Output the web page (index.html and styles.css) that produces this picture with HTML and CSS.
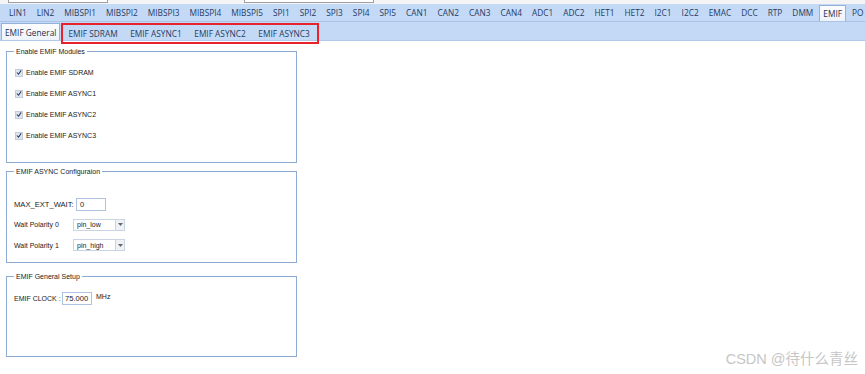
FILE: index.html
```html
<!DOCTYPE html>
<html lang="en">
<head>
    <meta charset="UTF-8">
    <meta name="viewport" content="width=device-width, initial-scale=1.0">
    <title>EMIF</title>
    <link rel="stylesheet" href="styles.css">
</head>
<body>
    <div class="top-strip">
        <span class="strip-box one"></span>
        <span class="strip-box two"></span>
    </div>

    <div class="tabbar main-tabs">
        <span class="tab">LIN1</span>
        <span class="tab">LIN2</span>
        <span class="tab">MIBSPI1</span>
        <span class="tab">MIBSPI2</span>
        <span class="tab">MIBSPI3</span>
        <span class="tab">MIBSPI4</span>
        <span class="tab">MIBSPI5</span>
        <span class="tab">SPI1</span>
        <span class="tab">SPI2</span>
        <span class="tab">SPI3</span>
        <span class="tab">SPI4</span>
        <span class="tab">SPI5</span>
        <span class="tab">CAN1</span>
        <span class="tab">CAN2</span>
        <span class="tab">CAN3</span>
        <span class="tab">CAN4</span>
        <span class="tab">ADC1</span>
        <span class="tab">ADC2</span>
        <span class="tab">HET1</span>
        <span class="tab">HET2</span>
        <span class="tab">I2C1</span>
        <span class="tab">I2C2</span>
        <span class="tab">EMAC</span>
        <span class="tab">DCC</span>
        <span class="tab">RTP</span>
        <span class="tab">DMM</span>
        <span class="tab active">EMIF</span>
        <span class="tab">PO</span>
    </div>

    <div class="tabbar sub-tabs">
        <span class="tab active">EMIF General</span>
        <div class="highlight">
            <span class="tab">EMIF SDRAM</span>
            <span class="tab">EMIF ASYNC1</span>
            <span class="tab">EMIF ASYNC2</span>
            <span class="tab">EMIF ASYNC3</span>
        </div>
    </div>

    <div class="content">
        <fieldset class="group modules">
            <legend>Enable EMIF Modules</legend>
            <label class="check-row"><span class="check"><svg width="7" height="7" viewBox="0 0 7 7"><path d="M1 3.5 L3 5.5 L6 1" fill="none" stroke="#2a3a5a" stroke-width="1.2"/></svg></span>Enable EMIF SDRAM</label>
            <label class="check-row"><span class="check"><svg width="7" height="7" viewBox="0 0 7 7"><path d="M1 3.5 L3 5.5 L6 1" fill="none" stroke="#2a3a5a" stroke-width="1.2"/></svg></span>Enable EMIF ASYNC1</label>
            <label class="check-row"><span class="check"><svg width="7" height="7" viewBox="0 0 7 7"><path d="M1 3.5 L3 5.5 L6 1" fill="none" stroke="#2a3a5a" stroke-width="1.2"/></svg></span>Enable EMIF ASYNC2</label>
            <label class="check-row"><span class="check"><svg width="7" height="7" viewBox="0 0 7 7"><path d="M1 3.5 L3 5.5 L6 1" fill="none" stroke="#2a3a5a" stroke-width="1.2"/></svg></span>Enable EMIF ASYNC3</label>
        </fieldset>

        <fieldset class="group async">
            <legend>EMIF ASYNC Configuraion</legend>
            <div class="field-row">
                <span class="field-label wide">MAX_EXT_WAIT:</span>
                <span class="textbox small">0</span>
            </div>
            <div class="field-row">
                <span class="field-label">Wait Polarity 0</span>
                <span class="combo"><span class="combo-text">pin_low</span><span class="combo-btn"><svg width="5" height="3" viewBox="0 0 5 3"><path d="M0 0 L5 0 L2.5 3 Z" fill="#666"/></svg></span></span>
            </div>
            <div class="field-row">
                <span class="field-label">Wait Polarity 1</span>
                <span class="combo"><span class="combo-text">pin_high</span><span class="combo-btn"><svg width="5" height="3" viewBox="0 0 5 3"><path d="M0 0 L5 0 L2.5 3 Z" fill="#666"/></svg></span></span>
            </div>
        </fieldset>

        <fieldset class="group setup">
            <legend>EMIF General Setup</legend>
            <div class="field-row clock">
                <span class="field-label">EMIF CLOCK :</span>
                <span class="textbox">75.000</span>
                <span class="unit">MHz</span>
            </div>
        </fieldset>
    </div>

    <div class="watermark">CSDN @待什么青丝</div>
</body>
</html>
```

FILE: styles.css
```css
* {
    margin: 0;
    padding: 0;
    box-sizing: border-box;
}

body {
    width: 865px;
    height: 374px;
    background: #ffffff;
    font-family: "Open Sans", "Liberation Sans", sans-serif;
    position: relative;
    overflow: hidden;
}

.top-strip {
    height: 4px;
    display: flex;
    gap: 6px;
    padding-left: 8px;
    background: #f4f4f4;
}

.strip-box {
    height: 3px;
    border: 1px solid #a0a0a0;
    border-top: none;
    background: #ffffff;
}

.strip-box.one {
    width: 100px;
}

.strip-box.two {
    width: 130px;
    margin-left: 130px;
}

.tabbar {
    display: flex;
    align-items: stretch;
    background: #c4d9f6;
    height: 18px;
}

.main-tabs {
    padding-left: 4px;
    border-bottom: 1px solid #a9c2e6;
    overflow: hidden;
}

.sub-tabs {
    height: 19px;
    padding-top: 1px;
    border-bottom: 1px solid #b3cbeb;
}

.tab {
    display: flex;
    align-items: center;
    padding: 0 5px;
    font-size: 8.3px;
    color: #243c63;
    white-space: nowrap;
}

.tab.active {
    background: linear-gradient(#fbfcfe, #eef3fa);
    border: 1px solid #94b1da;
    border-bottom: none;
    color: #1e2f4d;
    margin-top: 1px;
}

.main-tabs .tab.active {
    padding: 0 3px;
    margin-left: 1px;
    margin-right: 1px;
}

.sub-tabs .tab.active {
    padding: 0 3px;
    margin-top: 0;
    margin-left: 1px;
}

.highlight {
    display: flex;
    gap: 8.6px;
    margin-left: 1px;
    padding: 0 5px 0 3px;
    height: 21px;
    border: 2px solid #e8232b;
}

.highlight .tab {
    padding: 0 2px;
}

.content {
    padding: 7px 0 0 6px;
    display: flex;
    flex-direction: column;
    font-family: "Liberation Sans", sans-serif;
    font-size: 7px;
    color: #1a1a1a;
}

.group {
    width: 291px;
    border: 1px solid #8eabd6;
    padding: 0 0 0 7px;
}

.group legend {
    padding: 0 2px;
    font-size: 7px;
    color: #222222;
}

.modules {
    height: 115px;
    padding-top: 7px;
}

.async {
    height: 95px;
    margin-top: 5px;
    padding-top: 19px;
}

.setup {
    height: 84px;
    margin-top: 10px;
    padding-top: 8px;
}

.check-row {
    display: flex;
    align-items: center;
    gap: 3px;
    height: 21px;
    padding-left: 1px;
}

.check {
    display: flex;
    align-items: center;
    justify-content: center;
    width: 8px;
    height: 8px;
    background: #dfe5ee;
    border: 1px solid #c4ccd8;
}

.field-row {
    display: flex;
    align-items: center;
    height: 20.5px;
}

.field-label {
    width: 59px;
    flex-shrink: 0;
    white-space: nowrap;
}

.field-label.wide {
    width: 62px;
    font-size: 7.6px;
}

.textbox {
    display: flex;
    align-items: center;
    height: 13px;
    padding: 0 3px;
    border: 1px solid #aec3e2;
    background: #ffffff;
    font-size: 7.6px;
}

.textbox.small {
    width: 30px;
}

.clock .field-label {
    width: 48px;
    font-size: 7px;
}

.clock .textbox {
    width: 30px;
    padding: 0 2px;
}

.unit {
    margin-left: 4px;
    margin-top: -3px;
}

.combo {
    display: flex;
    width: 52px;
    height: 12px;
    border: 1px solid #c8d3e3;
    background: #ffffff;
}

.combo-text {
    flex: 1;
    display: flex;
    align-items: center;
    padding-left: 3px;
    font-size: 7px;
}

.combo-btn {
    width: 9px;
    display: flex;
    align-items: center;
    justify-content: center;
    border-left: 1px solid #c8d3e3;
    background: #eef1f6;
}

.watermark {
    position: absolute;
    right: 7px;
    bottom: 6px;
    font-family: "Liberation Sans", "Noto Sans CJK SC", sans-serif;
    font-size: 14.5px;
    color: #c6c6c6;
}
```
